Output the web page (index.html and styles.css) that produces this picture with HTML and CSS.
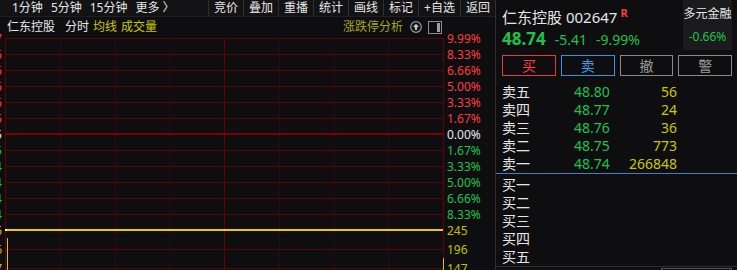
FILE: index.html
```html
<!DOCTYPE html>
<html lang="zh-CN">
<head>
    <meta charset="UTF-8">
    <meta name="viewport" content="width=device-width, initial-scale=1.0">
    <title>仁东控股 分时</title>
    <link rel="stylesheet" href="styles.css">
</head>
<body>
    <div class="app">
        <div class="main">
            <div class="toolbar">
                <div class="periods">
                    <span>1分钟</span>
                    <span>5分钟</span>
                    <span>15分钟</span>
                    <span>更多 〉</span>
                </div>
                <div class="tools">
                    <span class="tool">竞价</span>
                    <span class="tool">叠加</span>
                    <span class="tool">重播</span>
                    <span class="tool">统计</span>
                    <span class="tool">画线</span>
                    <span class="tool">标记</span>
                    <span class="tool">+自选</span>
                    <span class="tool">返回</span>
                </div>
            </div>

            <div class="chart-head">
                <div class="chart-title">
                    <span class="stock">仁东控股</span>
                    <span class="mode">分时</span>
                    <span class="hl">均线</span>
                    <span class="hl">成交量</span>
                </div>
                <div class="chart-opts">
                    <span class="limit">涨跌停分析</span>
                    <svg class="icon" width="12" height="12" viewBox="0 0 12 12">
                        <circle cx="6" cy="6" r="5.3" fill="none" stroke="#9a9a9a" stroke-width="1.2"/>
                        <path d="M6 2.8 L9 6 H7.2 V8.8 H4.8 V6 H3 Z" fill="#c8c8c8"/>
                    </svg>
                    <svg class="icon" width="14" height="13" viewBox="0 0 14 13">
                        <rect x="0.5" y="0.5" width="13" height="12" fill="none" stroke="#8c8c8c"/>
                        <rect x="9" y="2" width="3" height="9" fill="#a0a0a0"/>
                    </svg>
                </div>
            </div>

            <!-- 分时图: viewBox uses page coordinates -->
            <svg class="chart" width="495" height="233" viewBox="0 37 495 233">
                <g class="grid">
                    <line x1="5" y1="38.5" x2="443" y2="38.5"/>
                    <line x1="5" y1="54.5" x2="443" y2="54.5"/>
                    <line x1="5" y1="70.5" x2="443" y2="70.5"/>
                    <line x1="5" y1="86.5" x2="443" y2="86.5"/>
                    <line x1="5" y1="102.5" x2="443" y2="102.5"/>
                    <line x1="5" y1="118.5" x2="443" y2="118.5"/>
                    <line x1="5" y1="150.5" x2="443" y2="150.5"/>
                    <line x1="5" y1="166.5" x2="443" y2="166.5"/>
                    <line x1="5" y1="182.5" x2="443" y2="182.5"/>
                    <line x1="5" y1="198.5" x2="443" y2="198.5"/>
                    <line x1="5" y1="214.5" x2="443" y2="214.5"/>
                    <line x1="5" y1="249.5" x2="443" y2="249.5"/>
                    <line x1="5" y1="268.5" x2="443" y2="268.5"/>
                    <line x1="5.5" y1="38" x2="5.5" y2="270"/>
                    <line x1="224.5" y1="38" x2="224.5" y2="270"/>
                    <line x1="443.5" y1="38" x2="443.5" y2="270"/>
                </g>
                <line class="zero" x1="5" y1="134" x2="443" y2="134"/>
                <g class="grid dotted">
                    <line x1="60.5" y1="39" x2="60.5" y2="270"/>
                    <line x1="115.5" y1="39" x2="115.5" y2="270"/>
                    <line x1="169.5" y1="39" x2="169.5" y2="270"/>
                    <line x1="279.5" y1="39" x2="279.5" y2="270"/>
                    <line x1="334.5" y1="39" x2="334.5" y2="270"/>
                    <line x1="388.5" y1="39" x2="388.5" y2="270"/>
                </g>

                <line class="price" x1="5" y1="230" x2="443" y2="230"/>
                <line class="start" x1="5" y1="230" x2="7" y2="230"/>
                <line class="vol" x1="7.5" y1="238" x2="7.5" y2="270"/>
                <line class="vol" x1="443.5" y1="258" x2="443.5" y2="270"/>

                <g class="axis left">
                    <text class="up" x="2" y="38">59.57</text>
                    <text class="up" x="2" y="54">58.66</text>
                    <text class="up" x="2" y="70">57.76</text>
                    <text class="up" x="2" y="86">56.86</text>
                    <text class="up" x="2" y="102">55.96</text>
                    <text class="up" x="2" y="118">55.05</text>
                    <text class="flat" x="2" y="134">54.15</text>
                    <text class="down" x="2" y="150">53.25</text>
                    <text class="down" x="2" y="166">52.34</text>
                    <text class="down" x="2" y="182">51.44</text>
                    <text class="down" x="2" y="198">50.54</text>
                    <text class="down" x="2" y="214">49.64</text>
                    <text class="volt" x="2" y="230">245</text>
                    <text class="volt" x="2" y="249">196</text>
                    <text class="volt" x="2" y="268">147</text>
                </g>
                <g class="axis right">
                    <text class="up" x="447" y="38">9.99%</text>
                    <text class="up" x="447" y="54">8.33%</text>
                    <text class="up" x="447" y="70">6.66%</text>
                    <text class="up" x="447" y="86">5.00%</text>
                    <text class="up" x="447" y="102">3.33%</text>
                    <text class="up" x="447" y="118">1.67%</text>
                    <text class="flat" x="447" y="134">0.00%</text>
                    <text class="down" x="447" y="150">1.67%</text>
                    <text class="down" x="447" y="166">3.33%</text>
                    <text class="down" x="447" y="182">5.00%</text>
                    <text class="down" x="447" y="198">6.66%</text>
                    <text class="down" x="447" y="214">8.33%</text>
                    <text class="volt" x="447" y="230">245</text>
                    <text class="volt" x="447" y="249">196</text>
                    <text class="volt" x="447" y="268">147</text>
                </g>
            </svg>
        </div>

        <div class="side">
            <div class="quote-head">
                <div class="quote-main">
                    <div class="name">仁东控股 002647<span class="tag">R</span></div>
                    <div class="price-row">
                        <span class="last">48.74</span>
                        <span>-5.41</span>
                        <span>-9.99%</span>
                    </div>
                </div>
                <div class="sector">
                    <div>多元金融</div>
                    <div class="sector-chg">-0.66%</div>
                </div>
            </div>

            <div class="trade-btns">
                <button class="btn buy-btn">买</button>
                <button class="btn sell-btn">卖</button>
                <button class="btn plain-btn">撤</button>
                <button class="btn plain-btn">警</button>
            </div>

            <div class="book sell">
                <div class="row"><span class="lbl">卖五</span><span class="px">48.80</span><span class="qty">56</span></div>
                <div class="row"><span class="lbl">卖四</span><span class="px">48.77</span><span class="qty">24</span></div>
                <div class="row"><span class="lbl">卖三</span><span class="px">48.76</span><span class="qty">36</span></div>
                <div class="row"><span class="lbl">卖二</span><span class="px">48.75</span><span class="qty">773</span></div>
                <div class="row"><span class="lbl">卖一</span><span class="px">48.74</span><span class="qty">266848</span></div>
            </div>
            <div class="book buy">
                <div class="row"><span class="lbl">买一</span></div>
                <div class="row"><span class="lbl">买二</span></div>
                <div class="row"><span class="lbl">买三</span></div>
                <div class="row"><span class="lbl">买四</span></div>
                <div class="row"><span class="lbl">买五</span></div>
            </div>
            <div class="sub-tabs">
                <span class="sub-tab"></span>
            </div>
        </div>
    </div>
</body>
</html>
```

FILE: styles.css
```css
body {
    margin: 0;
    background-color: #0e0e11;
    color: #e6e6e6;
    font-family: "Noto Sans", "Noto Sans CJK SC", sans-serif;
    overflow: hidden;
}

.app {
    display: flex;
    width: 737px;
    height: 270px;
    overflow: hidden;
}

/* Left: toolbar + chart */
.main {
    width: 495px;
    flex-shrink: 0;
    border-right: 1px solid #2c2c31;
    display: flex;
    flex-direction: column;
}

.toolbar {
    height: 16px;
    background-color: #131316;
    border-bottom: 1px solid #1f1f23;
    display: flex;
    font-size: 12px;
    line-height: 16px;
}

.periods {
    display: flex;
    gap: 8px;
    padding-left: 12px;
}

.tools {
    margin-left: auto;
    display: flex;
}

.tool {
    padding: 0 5px;
    border-left: 1px solid #2e2e33;
}

.chart-head {
    height: 20px;
    display: flex;
    align-items: center;
    font-size: 12px;
    line-height: 16px;
}

.chart-title {
    display: flex;
    padding-left: 7px;
}

.chart-title .mode {
    margin-left: 10px;
}

.chart-title .hl {
    margin-left: 4px;
    color: #c8c800;
}

.chart-opts {
    margin-left: auto;
    padding-right: 53px;
    display: flex;
    align-items: center;
    gap: 6px;
}

.chart-opts .limit {
    color: #a8a818;
    margin-right: 1px;
}

.icon {
    display: block;
}

.chart {
    display: block;
    overflow: visible;
}

.grid line {
    stroke: #650000;
    stroke-width: 1;
}

.grid.dotted line {
    stroke: #6a0000;
    stroke-dasharray: 1 2;
}

.zero {
    stroke: #7c0000;
    stroke-width: 2;
}

.price {
    stroke: #f2c800;
    stroke-width: 2;
}

.start {
    stroke: #ffffff;
    stroke-width: 2;
}

.vol {
    stroke: #e6c000;
    stroke-width: 1;
}

.axis text {
    font-family: "Noto Sans", sans-serif;
    font-size: 12px;
    dominant-baseline: central;
}

.axis.left text {
    text-anchor: end;
}

.axis .up { fill: #ff3c3c; }
.axis .down { fill: #1ec34a; }
.axis .flat { fill: #e8e8e8; }
.axis .volt { fill: #c0c000; }

/* Right: quote panel */
.side {
    flex: 1;
    display: flex;
    flex-direction: column;
}

.quote-head {
    height: 50px;
    display: flex;
    padding: 0 5px 0 6px;
}

.quote-main {
    flex: 1;
}

.name {
    font-size: 15px;
    line-height: 20px;
    padding-top: 3px;
    white-space: nowrap;
}

.tag {
    color: #ff3c3c;
    font-size: 11px;
    font-weight: bold;
    margin-left: 3px;
    vertical-align: 6px;
}

.price-row {
    display: flex;
    align-items: baseline;
    gap: 9px;
    margin-top: 2px;
    color: #1ec34a;
    font-size: 14px;
    line-height: 20px;
}

.price-row .last {
    font-size: 17px;
    font-weight: bold;
}

.sector {
    width: 49px;
    background-color: #1b1b1e;
    font-size: 12px;
    line-height: 16px;
    text-align: center;
    padding-top: 6px;
    box-sizing: border-box;
    white-space: nowrap;
}

.sector-chg {
    margin-top: 7px;
    color: #1ec34a;
}

.trade-btns {
    display: flex;
    gap: 5px;
    margin-top: 5px;
    padding: 0 5px 0 6px;
}

.btn {
    flex: 1;
    height: 21px;
    padding: 0;
    background: transparent;
    border: 1px solid #8a8a8a;
    font-family: "Noto Sans CJK SC", sans-serif;
    font-size: 14px;
    line-height: 19px;
    color: #9a9a9a;
}

.buy-btn {
    border-color: #e03c3c;
    color: #ff3c3c;
}

.sell-btn {
    border-color: #3d8fd9;
    color: #4a9be6;
}

.book {
    padding-left: 6px;
    font-size: 14px;
    line-height: 18px;
}

.book.sell {
    margin-top: 7px;
    border-bottom: 1px solid #3f7fbf;
}

.book.buy {
    padding-top: 2px;
    border-bottom: 1px solid #2e2e33;
}

.row {
    display: flex;
    height: 18px;
}

.lbl {
    width: 72px;
}

.px {
    width: 50px;
    color: #1ec34a;
}

.qty {
    width: 53px;
    text-align: right;
    color: #c8c800;
}

.sub-tabs {
    display: flex;
    padding: 1px 5px 0 0;
}

.sub-tab {
    margin-left: auto;
    width: 69px;
    height: 8px;
    border: 1px solid #555;
}
```
